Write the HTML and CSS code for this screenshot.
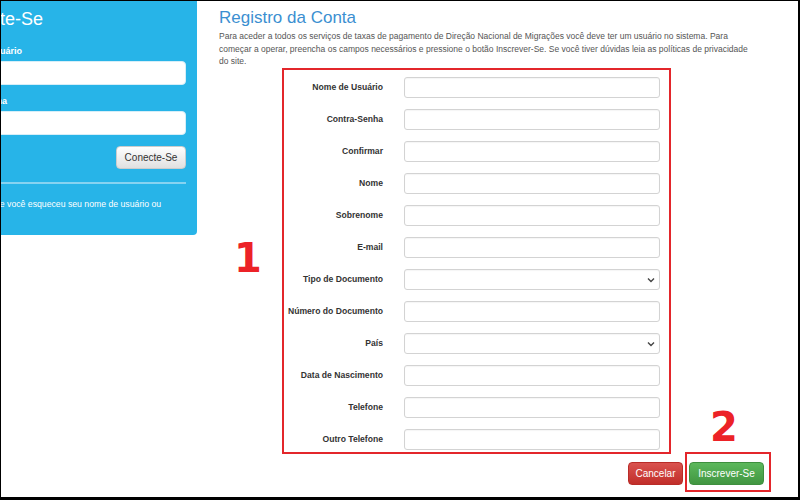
FILE: index.html
```html
<!DOCTYPE html>
<html lang="pt">
<head>
<meta charset="utf-8">
<title>Registro da Conta</title>
<link rel="stylesheet" href="styles.css">
</head>
<body>
<div class="frame">
  <aside class="login">
    <h2 class="login-title">Conecte-Se</h2>
    <label class="login-label">Nome de Usuário</label>
    <div class="login-input"></div>
    <label class="login-label second">Contra-Senha</label>
    <div class="login-input"></div>
    <div class="login-actions"><button class="btn-default">Conecte-Se</button></div>
    <div class="login-rule"></div>
    <p class="login-note">Se você esqueceu seu nome de usuário ou</p>
  </aside>

  <main class="main">
    <h1 class="title">Registro da Conta</h1>
    <p class="intro">Para aceder a todos os serviços de taxas de pagamento de Direção Nacional de Migrações você deve ter um usuário no sistema. Para começar a operar, preencha os campos necessários e pressione o botão Inscrever-Se. Se você tiver dúvidas leia as políticas de privacidade do site.</p>

    <form class="form">
      <div class="row"><label>Nome de Usuário</label><div class="input"></div></div>
      <div class="row"><label>Contra-Senha</label><div class="input"></div></div>
      <div class="row"><label>Confirmar</label><div class="input"></div></div>
      <div class="row"><label>Nome</label><div class="input"></div></div>
      <div class="row"><label>Sobrenome</label><div class="input"></div></div>
      <div class="row"><label>E-mail</label><div class="input"></div></div>
      <div class="row"><label>Tipo de Documento</label><div class="input select"><svg class="chev" width="8" height="6" viewBox="0 0 8 6"><path d="M1 1.5 L4 4.5 L7 1.5" fill="none" stroke="#444" stroke-width="1.4"/></svg></div></div>
      <div class="row"><label>Número do Documento</label><div class="input"></div></div>
      <div class="row"><label>País</label><div class="input select"><svg class="chev" width="8" height="6" viewBox="0 0 8 6"><path d="M1 1.5 L4 4.5 L7 1.5" fill="none" stroke="#444" stroke-width="1.4"/></svg></div></div>
      <div class="row"><label>Data de Nascimento</label><div class="input"></div></div>
      <div class="row"><label>Telefone</label><div class="input"></div></div>
      <div class="row"><label>Outro Telefone</label><div class="input"></div></div>
    </form>

    <div class="actions">
      <button class="btn btn-danger">Cancelar</button>
      <button class="btn btn-success marked">Inscrever-Se</button>
    </div>
  </main>

  <span class="step step-1">1</span>
  <span class="step step-2">2</span>
</div>
</body>
</html>
```

FILE: styles.css
```css
* { box-sizing: border-box; }

html, body {
  margin: 0;
  padding: 0;
  background: #fff;
}

.frame {
  position: relative;
  width: 800px;
  height: 500px;
  overflow: hidden;
  display: flex;
  align-items: flex-start;
  border-style: solid;
  border-color: #000;
  border-width: 1px 2px 3px 1px;
  font-family: "Liberation Sans", Arial, sans-serif;
  background: #fff;
}

/* Left login panel (partly scrolled off to the left) */
.login {
  flex: none;
  margin-left: -64px;
  width: 260px;
  height: 234px;
  background: #27b4e8;
  border-radius: 0 0 4px 0;
  padding: 8px 11px 0 11px;
  color: #fff;
}

.login-title {
  margin: 0;
  font-size: 18px;
  line-height: 20px;
  font-weight: normal;
}

.login-label {
  display: block;
  margin-top: 17px;
  font-size: 9px;
  line-height: 11px;
  font-weight: bold;
}

.login-label.second {
  margin-top: 11px;
}

.login-input {
  margin-top: 4px;
  height: 24px;
  background: #fff;
  border-radius: 4px;
  border: 1px solid #d6eef8;
}

.login-actions {
  display: flex;
  justify-content: flex-end;
  margin-top: 11px;
}

.btn-default {
  height: 23px;
  width: 70px;
  padding: 0;
  font-family: inherit;
  font-size: 10px;
  color: #333;
  background: linear-gradient(#ffffff, #e0e0e0);
  border: 1px solid #ccc;
  border-radius: 4px;
}

.login-rule {
  margin-top: 13px;
  height: 2px;
  background: #86d3f1;
}

.login-note {
  margin: 15px 0 0 46px;
  font-size: 8.7px;
  line-height: 11px;
  white-space: nowrap;
}

/* Main column */
.main {
  flex: none;
  margin-left: 22px;
  width: 545px;
  padding-top: 7px;
}

.title {
  margin: 0;
  font-size: 17px;
  line-height: 20px;
  font-weight: normal;
  color: #3b8fd1;
}

.intro {
  margin: 2px 0 0 0;
  width: 540px;
  font-size: 8.5px;
  line-height: 12.5px;
  color: #555;
}

.form {
  margin: 0 0 0 63px;
  width: 389px;
  border: 2px solid #e3262b;
  padding: 7px 9px 2px 0;
  display: flex;
  flex-direction: column;
  gap: 11px;
}

.row {
  display: flex;
  align-items: center;
  height: 21px;
}

.row label {
  width: 99px;
  margin-right: 21px;
  text-align: right;
  font-size: 8.6px;
  font-weight: bold;
  color: #333;
  white-space: nowrap;
}

.input {
  position: relative;
  width: 256px;
  height: 21px;
  border: 1px solid #d3d3d3;
  border-radius: 3px;
  background: #fff;
  box-shadow: inset 0 1px 1px rgba(0,0,0,0.04);
}

.chev {
  position: absolute;
  right: 4px;
  top: 7px;
}

.actions {
  display: flex;
  justify-content: flex-end;
  gap: 6px;
  margin-top: 8px;
}

.btn {
  position: relative;
  height: 23px;
  padding: 0 9px;
  font-family: inherit;
  font-size: 10px;
  color: #fff;
  border-radius: 4px;
  border: 1px solid transparent;
}

.btn-danger {
  width: 55px;
  padding: 0;
  background: linear-gradient(#d9534f, #c12e2a);
  border-color: #b92c28;
}

.btn-success {
  width: 75px;
  padding: 0;
  background: linear-gradient(#5cb85c, #419641);
  border-color: #3e8f3e;
}

/* Annotation overlays */
.marked::after {
  content: "";
  position: absolute;
  left: -5px;
  top: -11px;
  right: -8px;
  bottom: -8px;
  border: 2px solid #e3262b;
}

.step {
  position: absolute;
  font-family: "DejaVu Sans", sans-serif;
  font-weight: bold;
  font-size: 40px;
  line-height: 40px;
  color: #ec2227;
}

.step-1 {
  left: 233px;
  top: 237px;
}

.step-2 {
  left: 709px;
  top: 406px;
}
```
